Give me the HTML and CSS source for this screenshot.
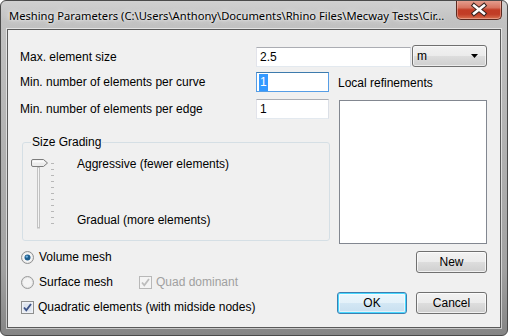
FILE: index.html
```html
<!DOCTYPE html>
<html lang="en">
<head>
    <meta charset="UTF-8">
    <title>Meshing Parameters</title>
    <link rel="stylesheet" href="styles.css">
</head>
<body>
    <div class="window">
        <div class="titlebar">
            <span class="title">Meshing Parameters (C:\Users\Anthony\Documents\Rhino Files\Mecway Tests\Cir...</span>
            <div class="close">
                <svg width="44" height="19" viewBox="0 0 44 19">
                    <path d="M17 5.5 L27 13.5 M27 5.5 L17 13.5" stroke="#3a2420" stroke-width="4.6" stroke-linecap="square"/>
                    <path d="M17 5.5 L27 13.5 M27 5.5 L17 13.5" stroke="#ffffff" stroke-width="2.5" stroke-linecap="square"/>
                </svg>
            </div>
        </div>
        <div class="client">
            <div class="row-size">
                <span class="label">Max. element size</span>
                <div class="textbox wide">2.5</div>
                <div class="combo">
                    <span>m</span>
                    <svg width="7" height="4" viewBox="0 0 7 4"><path d="M0 0 H7 L3.5 4 Z" fill="#000"/></svg>
                </div>
            </div>
            <div class="middle">
                <div class="left">
                    <div class="row">
                        <span class="label">Min. number of elements per curve</span>
                        <div class="textbox focus"><span class="sel">1</span></div>
                    </div>
                    <div class="row gap">
                        <span class="label">Min. number of elements per edge</span>
                        <div class="textbox">1</div>
                    </div>
                    <fieldset class="grading">
                        <legend>Size Grading</legend>
                        <svg class="slider" width="26" height="72" viewBox="0 0 26 72">
                            <rect x="6.5" y="9" width="2" height="61" fill="#f4f4f4" stroke="#c2c2c2" stroke-width="1"/>
                            <g stroke="#b8b8b8" stroke-width="1">
                                <path d="M20 5.5h3M20 11.5h3M20 17.5h3M20 23.5h3M20 29.5h3M20 35.5h3M20 41.5h3M20 47.5h3M20 53.5h3M20 59.5h3M20 65.5h3"/>
                            </g>
                            <path d="M2 1.5 H12.5 L16.5 5 L12.5 8.5 H2 Q0.5 8.5 0.5 7 V3 Q0.5 1.5 2 1.5 Z" fill="#ececec" stroke="#7c7c7c"/>
                            <path d="M2 2.5 H12 L14.5 4.6 H1.5 V3 Z" fill="#fafafa"/>
                        </svg>
                        <div class="grade-labels">
                            <span>Aggressive (fewer elements)</span>
                            <span>Gradual (more elements)</span>
                        </div>
                    </fieldset>
                    <div class="option volume">
                        <svg width="13" height="13" viewBox="0 0 13 13">
                            <circle cx="6.5" cy="6.5" r="6" fill="#e9e9e9" stroke="#8e8f8f"/>
                            <circle cx="6.5" cy="6.5" r="4.5" fill="#f6f6f6"/>
                            <circle cx="6.5" cy="6.5" r="3" fill="#1f5f8f"/>
                            <circle cx="5.8" cy="5.6" r="1.2" fill="#6fb0df"/>
                        </svg>
                        <span>Volume mesh</span>
                    </div>
                    <div class="option surface">
                        <div class="radio-item">
                            <svg width="13" height="13" viewBox="0 0 13 13">
                                <circle cx="6.5" cy="6.5" r="6" fill="#e4e4e4" stroke="#9a9b9b"/>
                                <circle cx="6.5" cy="6.5" r="4.5" fill="#f4f4f4"/>
                            </svg>
                            <span>Surface mesh</span>
                        </div>
                        <div class="check-item disabled">
                            <svg width="13" height="13" viewBox="0 0 13 13">
                                <rect x="0.5" y="0.5" width="12" height="12" fill="#f4f4f4" stroke="#b8b8b8"/>
                                <path d="M3 6.5 L5.3 9.3 L10 3" fill="none" stroke="#bdbdbd" stroke-width="1.8"/>
                            </svg>
                            <span>Quad dominant</span>
                        </div>
                    </div>
                </div>
                <div class="right">
                    <div class="list-label">Local refinements</div>
                    <div class="listbox"></div>
                    <div class="btn new">New</div>
                </div>
            </div>
            <div class="bottom">
                <div class="option quadratic">
                    <svg width="13" height="13" viewBox="0 0 13 13">
                        <rect x="0.5" y="0.5" width="12" height="12" fill="#eef1f6" stroke="#8e8f8f"/>
                        <rect x="2.5" y="2.5" width="8" height="8" fill="#dde4ee"/>
                        <path d="M3 6.5 L5.3 9.3 L10 3" fill="none" stroke="#3d5388" stroke-width="1.9"/>
                    </svg>
                    <span>Quadratic elements (with midside nodes)</span>
                </div>
                <div class="buttons">
                    <div class="btn default">OK</div>
                    <div class="btn">Cancel</div>
                </div>
            </div>
        </div>
    </div>
</body>
</html>
```

FILE: styles.css
```css
body {
    margin: 0;
    padding: 0;
    background: #ffffff;
    font-family: "Liberation Sans", Arial, sans-serif;
    font-size: 12px;
    color: #000;
}
.window {
    box-sizing: border-box;
    width: 508px;
    height: 336px;
    border: 1px solid #4a4a4a;
    border-radius: 6px;
    background: linear-gradient(to bottom, #d0d0d0 0%, #c2c2c2 6%, #b3b3b3 40%, #a2a2a2 80%, #858585 100%);
    overflow: hidden;
}
.titlebar {
    height: 28px;
    display: flex;
    align-items: flex-start;
}
.title {
    flex: 1;
    padding-left: 8px;
    padding-top: 8px;
    font-family: "Noto Sans", sans-serif;
    font-size: 11.2px;
    line-height: 14px;
    white-space: nowrap;
    text-shadow: 0 0 6px rgba(255, 255, 255, 0.95), 0 0 3px rgba(255, 255, 255, 0.9);
}
.close {
    width: 44px;
    height: 19px;
    margin-right: 5px;
    margin-top: -1px;
    border: 1px solid #5c2a20;
    border-top: none;
    border-radius: 0 0 5px 5px;
    background: linear-gradient(to bottom, #e6a394 0%, #d77460 40%, #c23c25 52%, #c13d26 75%, #d8704f 100%);
    box-shadow: inset 0 0 0 1px rgba(255, 220, 210, 0.4);
}
.close svg {
    display: block;
}
.client {
    box-sizing: border-box;
    width: 494px;
    height: 299px;
    margin-left: 6px;
    border: 1px solid #5a5a5a;
    box-shadow: 0 0 0 1px rgba(255, 255, 255, 0.55);
    background: #f0f0f0;
    padding: 15px 13px 0 12px;
}
.label {
    width: 236px;
    flex-shrink: 0;
    line-height: 20px;
}
.row-size {
    display: flex;
    align-items: flex-end;
    height: 22px;
}
.textbox {
    box-sizing: border-box;
    height: 20px;
    width: 73px;
    background: #fff;
    border: 1px solid #e3e9ef;
    border-top-color: #abadb3;
    border-left-color: #e2e3ea;
    border-right-color: #dbdfe6;
    padding-left: 3px;
    line-height: 18px;
}
.textbox.wide {
    width: 155px;
}
.textbox.focus {
    border-color: #569de5;
    border-top-color: #3d7bad;
    padding-left: 2px;
}
.sel {
    background: #3399ff;
    color: #fff;
    padding: 1px 1px 2px 1px;
}
.combo {
    box-sizing: border-box;
    width: 75px;
    height: 22px;
    margin-left: 1px;
    border: 1px solid #707070;
    border-radius: 3px;
    background: linear-gradient(to bottom, #f2f2f2 0%, #ebebeb 50%, #dddddd 51%, #cfcfcf 100%);
    box-shadow: inset 0 0 0 1px rgba(255, 255, 255, 0.6);
    display: flex;
    align-items: center;
    justify-content: space-between;
    padding: 0 8px 0 4px;
}
.middle {
    display: flex;
    margin-top: 5px;
    height: 218px;
}
.left {
    width: 318px;
}
.row {
    display: flex;
    height: 20px;
}
.row.gap {
    margin-top: 7px;
}
.grading {
    box-sizing: border-box;
    width: 308px;
    margin: 16px 0 0 2px;
    padding: 0 0 10px 8px;
    border: 1px solid #d5dfe5;
    border-radius: 3px;
    display: flex;
}
.grading legend {
    margin-left: 0;
    padding: 0 1px;
    line-height: 14px;
}
.slider {
    display: block;
    margin-top: 9px;
}
.grade-labels {
    display: flex;
    flex-direction: column;
    justify-content: space-between;
    height: 70px;
    margin-top: 8px;
    margin-left: 20px;
    line-height: 14px;
}
.option {
    display: flex;
    align-items: center;
    height: 14px;
}
.option svg {
    flex-shrink: 0;
}
.volume {
    margin-top: 9px;
    margin-left: 1px;
    gap: 5px;
}
.surface {
    margin-top: 11px;
    margin-left: 1px;
}
.radio-item {
    display: flex;
    align-items: center;
    gap: 5px;
    width: 118px;
}
.check-item {
    display: flex;
    align-items: center;
    gap: 4px;
}
.disabled {
    color: #a0a0a0;
}
.right {
    width: 149px;
}
.list-label {
    line-height: 20px;
    padding-top: 1px;
    height: 20px;
}
.listbox {
    box-sizing: border-box;
    width: 148px;
    height: 144px;
    margin: 7px 0 0 1px;
    background: #fff;
    border: 1px solid #828790;
}
.btn {
    box-sizing: border-box;
    width: 70px;
    height: 22px;
    border: 1px solid #707070;
    border-radius: 3px;
    background: linear-gradient(to bottom, #f2f2f2 0%, #ebebeb 50%, #dddddd 51%, #cfcfcf 100%);
    box-shadow: inset 0 0 0 1px rgba(255, 255, 255, 0.7);
    text-align: center;
    line-height: 20px;
}
.btn.new {
    width: 71px;
    margin: 7px 0 0 auto;
}
.btn.default {
    border-color: #3c7fb1;
    box-shadow: inset 0 0 0 1px #48d8ff, inset 0 0 0 2px rgba(255, 255, 255, 0.5);
    background: linear-gradient(to bottom, #eaf6fd 0%, #e4f1f9 50%, #d3e7f4 51%, #c8dfef 100%);
}
.bottom {
    display: flex;
    justify-content: space-between;
    margin-top: 2px;
}
.quadratic {
    margin-top: 8px;
    margin-left: 1px;
    gap: 4px;
}
.buttons {
    display: flex;
    gap: 9px;
}
.buttons .btn:last-child {
    width: 71px;
}
```
